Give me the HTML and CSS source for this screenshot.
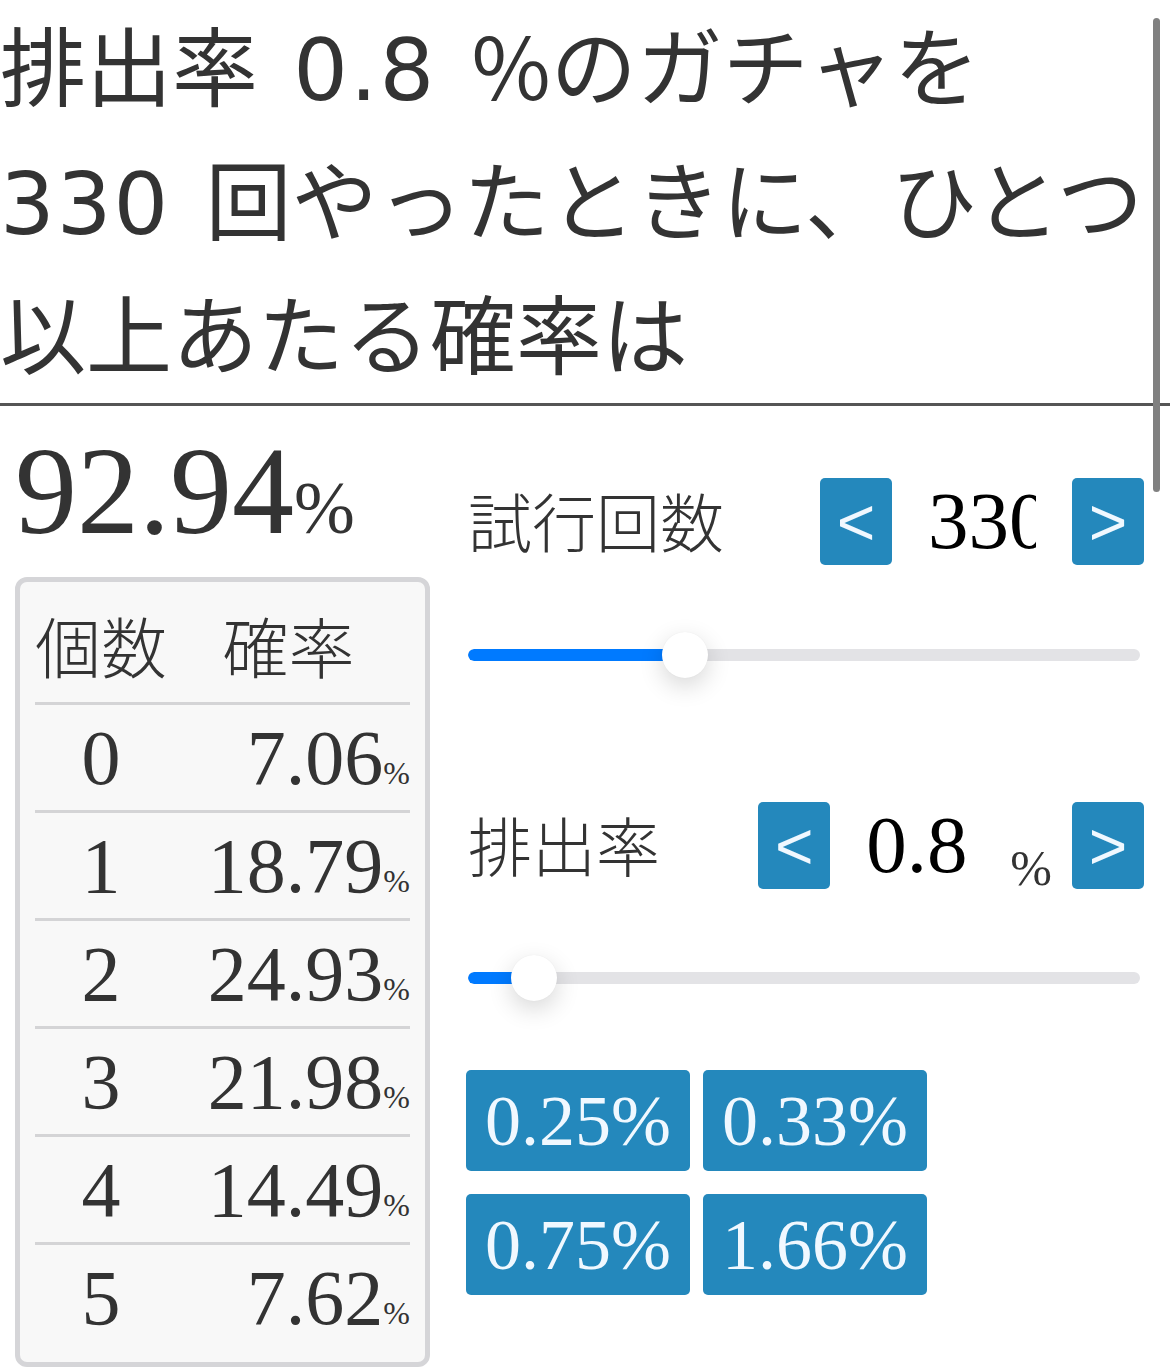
FILE: index.html
```html
<!DOCTYPE html>
<html lang="ja">
<head>
<meta charset="utf-8">
<title>ガチャ確率</title>
<link rel="stylesheet" href="styles.css">
</head>
<body>
<h1 class="title"><span class="tline">排出率<span class="hnum"> 0.8 </span>%のガチャを</span><span class="tline"><span class="hnum">330 </span>回やったときに、ひとつ</span><span class="tline">以上あたる確率は</span></h1>
<div class="main">
  <div class="left">
    <div class="total">92.94<span class="pct">%</span></div>
    <div class="dist">
      <div class="thead"><div class="c1">個数</div><div class="c2">確率</div></div>
      <div class="row"><div class="c1">0</div><div class="c2">7.06<span class="pct-s">%</span></div></div>
      <div class="row"><div class="c1">1</div><div class="c2">18.79<span class="pct-s">%</span></div></div>
      <div class="row"><div class="c1">2</div><div class="c2">24.93<span class="pct-s">%</span></div></div>
      <div class="row"><div class="c1">3</div><div class="c2">21.98<span class="pct-s">%</span></div></div>
      <div class="row"><div class="c1">4</div><div class="c2">14.49<span class="pct-s">%</span></div></div>
      <div class="row"><div class="c1">5</div><div class="c2">7.62<span class="pct-s">%</span></div></div>
    </div>
  </div>
  <div class="right">
    <div class="ctrl">
      <span class="label">試行回数</span>
      <button class="step">&lt;</button>
      <input class="val" type="text" value="330">
      <button class="step">&gt;</button>
    </div>
    <div class="slider">
      <div class="track"><div class="fill" style="width:217px"></div></div>
      <div class="thumb" style="left:194px"></div>
    </div>
    <div class="ctrl ctrl-rate">
      <span class="label">排出率</span>
      <button class="step">&lt;</button>
      <input class="val" type="text" value="0.8">
      <span class="unit">%</span>
      <button class="step">&gt;</button>
    </div>
    <div class="slider slider-rate">
      <div class="track"><div class="fill" style="width:66px"></div></div>
      <div class="thumb" style="left:43px"></div>
    </div>
    <div class="presets">
      <button class="preset">0.25%</button>
      <button class="preset">0.33%</button>
      <button class="preset">0.75%</button>
      <button class="preset">1.66%</button>
    </div>
  </div>
</div>
<div class="scrollbar"></div>
</body>
</html>
```
FILE: styles.css
```css
html, body {
  margin: 0;
  padding: 0;
  background: #ffffff;
}

body {
  color: #333333;
  font-family: "Noto Sans CJK JP", "Noto Sans", sans-serif;
  overflow: hidden;
}

.title {
  margin: 0;
  padding: 0 0 1px;
  font-size: 86px;
  font-weight: 400;
  white-space: nowrap;
  border-bottom: 3px solid #555555;
  color: #333333;
}

.tline {
  display: block;
  height: 134px;
  line-height: 125px;
}

.hnum {
  font-family: "DejaVu Sans", "Noto Sans CJK JP", sans-serif;
  letter-spacing: 2px;
  word-spacing: 6px;
}

.main {
  display: flex;
  padding-left: 15px;
}

.left {
  width: 415px;
  flex: none;
}

.total {
  margin-top: 25px;
  height: 122px;
  font-family: "Liberation Serif", serif;
  font-size: 124px;
  line-height: 122px;
  color: #333333;
  white-space: nowrap;
}

.total .pct {
  font-size: 73px;
  line-height: 1;
}

.dist {
  margin-top: 24px;
  border: 5px solid #d5d5d8;
  border-radius: 12px;
  background: #f8f8f8;
  padding: 12px 15px;
}

.thead {
  display: flex;
  align-items: center;
  height: 108px;
  box-sizing: border-box;
  padding-bottom: 8px;
  font-size: 66px;
  font-weight: 300;
  color: #333333;
}

.row {
  display: flex;
  align-items: center;
  height: 105px;
  border-top: 3px solid #d4d4d6;
  font-family: "Liberation Serif", serif;
  font-size: 78px;
  color: #333333;
}

.c1 {
  width: 132px;
  flex: none;
  text-align: center;
}

.c2 {
  flex: 1;
  text-align: right;
  white-space: nowrap;
}

.thead .c2 {
  text-align: center;
}

.pct-s {
  font-size: 32px;
}

.right {
  width: 676px;
  flex: none;
  margin-left: 38px;
  padding-top: 72px;
}

.ctrl {
  display: flex;
  align-items: center;
  height: 87px;
}

.label {
  flex: 1;
  padding-bottom: 6px;
  font-size: 64px;
  font-weight: 300;
  color: #333333;
  white-space: nowrap;
}

.step {
  width: 72px;
  height: 87px;
  flex: none;
  padding: 0;
  border: 0;
  border-radius: 5px;
  background: #2488bc;
  color: #f0f8ff;
  font-family: "Liberation Sans", sans-serif;
  font-size: 66px;
  line-height: 1;
}

.val {
  width: 108px;
  flex: none;
  margin: 0 36px;
  padding: 0;
  border: 0;
  outline: none;
  background: transparent;
  color: #000000;
  font-family: "Liberation Serif", serif;
  font-size: 81px;
}

.unit {
  align-self: flex-end;
  margin-right: 20px;
  font-family: "Liberation Serif", serif;
  font-size: 50px;
  line-height: 42px;
  color: #333333;
}

.slider {
  position: relative;
  width: 672px;
  height: 48px;
  margin-top: 66px;
}

.track {
  position: relative;
  top: 18px;
  height: 12px;
  border-radius: 6px;
  background: #e3e3e6;
  overflow: hidden;
}

.fill {
  height: 100%;
  background: #007aff;
  border-radius: 6px 0 0 6px;
}

.thumb {
  position: absolute;
  top: 1px;
  width: 46px;
  height: 46px;
  border-radius: 50%;
  background: #ffffff;
  box-shadow: 0 8px 24px rgba(0, 0, 0, 0.16), 0 0 1px rgba(0, 0, 0, 0.08);
}

.ctrl-rate {
  margin-top: 123px;
}

.slider-rate {
  margin-top: 65px;
}

.presets {
  display: grid;
  grid-template-columns: 224px 224px;
  grid-auto-rows: 101px;
  column-gap: 13px;
  row-gap: 23px;
  margin-top: 68px;
  margin-left: -2px;
}

.preset {
  padding: 0;
  border: 0;
  border-radius: 5px;
  background: #2488bc;
  color: #f0f8ff;
  font-family: "Liberation Serif", serif;
  font-size: 72px;
  line-height: 1;
}

.scrollbar {
  position: fixed;
  top: 18px;
  left: 1153px;
  width: 7px;
  height: 474px;
  border-radius: 4px;
  background: #808080;
}
```
